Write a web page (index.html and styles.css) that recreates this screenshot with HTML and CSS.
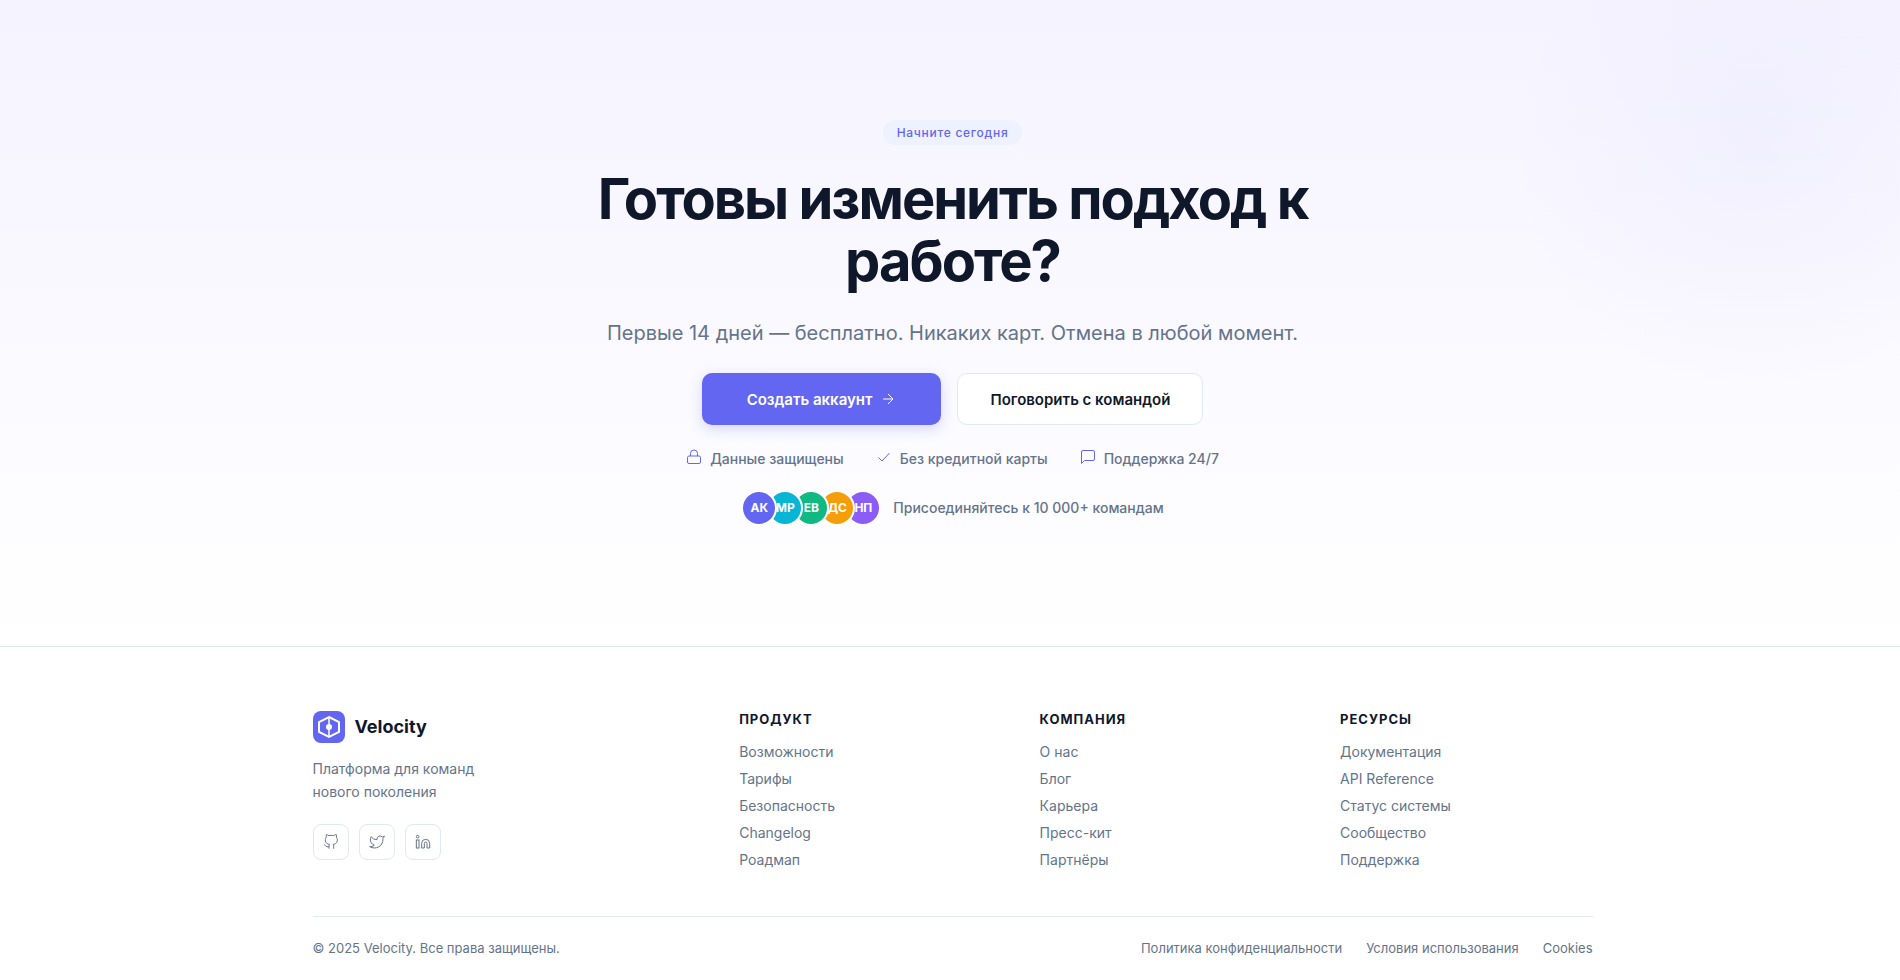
FILE: index.html
```html
<!DOCTYPE html>
<html lang="ru">
<head>
<meta charset="UTF-8">
<meta name="viewport" content="width=device-width, initial-scale=1">
<title>Velocity</title>
<link rel="stylesheet" href="styles.css">
</head>
<body>

<!-- CTA -->
<section class="cta">
  <div class="cta-glow"></div>
  <div class="cta-content">
    <span class="badge">Начните сегодня</span>
    <h2 class="cta-title">Готовы изменить подход к работе?</h2>
    <p class="cta-subtitle">Первые 14 дней — бесплатно. Никаких карт. Отмена в любой момент.</p>

    <div class="cta-actions">
      <button class="btn btn-primary" type="button">
        Создать аккаунт
        <svg width="16" height="16" viewBox="0 0 16 16"><path d="M3 8h10M8 3l5 5-5 5"/></svg>
      </button>
      <button class="btn btn-secondary" type="button">Поговорить с командой</button>
    </div>

    <div class="cta-trust">
      <div class="trust-item">
        <svg width="16" height="16" viewBox="0 0 16 16"><rect x="1.5" y="7" width="13" height="7.5" rx="1.5"/><path d="M4.5 7V4.5a3.5 3.5 0 0 1 7 0V7"/></svg>
        <span>Данные защищены</span>
      </div>
      <div class="trust-item">
        <svg width="16" height="16" viewBox="0 0 16 16"><path d="M13.5 4L6 12 2.5 8.5"/></svg>
        <span>Без кредитной карты</span>
      </div>
      <div class="trust-item">
        <svg width="16" height="16" viewBox="0 0 16 16"><path d="M14.5 10a1.5 1.5 0 0 1-1.5 1.5H4.5l-3 3V3A1.5 1.5 0 0 1 3 1.5h10A1.5 1.5 0 0 1 14.5 3z"/></svg>
        <span>Поддержка 24/7</span>
      </div>
    </div>

    <div class="cta-social">
      <div class="avatars">
        <span class="avatar indigo">АК</span>
        <span class="avatar cyan">МР</span>
        <span class="avatar green">ЕВ</span>
        <span class="avatar amber">ДС</span>
        <span class="avatar violet">НП</span>
      </div>
      <span>Присоединяйтесь к 10 000+ командам</span>
    </div>
  </div>
</section>

<!-- Footer -->
<footer class="footer">
  <div class="footer-container">
    <div class="footer-grid">
      <div class="footer-brand">
        <a href="#" class="logo">
          <svg width="32" height="32" viewBox="0 0 32 32">
            <rect width="32" height="32" rx="8" fill="#6366f1"/>
            <path d="M16 6l10 5v10l-10 5-10-5V11z" fill="none" stroke="#fff" stroke-width="2"/>
            <path d="M16 6v20" stroke="#fff" stroke-width="1.5"/>
            <circle cx="16" cy="16" r="3" fill="#fff"/>
          </svg>
          <span>Velocity</span>
        </a>
        <p class="tagline">Платформа для команд<br>нового поколения</p>
        <div class="socials">
          <a href="#" aria-label="GitHub">
            <svg width="16" height="16" viewBox="0 0 24 24"><path d="M9 19c-5 1.5-5-2.5-7-3m14 6v-3.87a3.37 3.37 0 0 0-.94-2.61c3.14-.35 6.44-1.54 6.44-7A5.44 5.44 0 0 0 20 4.77 5.07 5.07 0 0 0 19.91 1S18.73.65 16 2.48a13.38 13.38 0 0 0-7 0C6.27.65 5.09 1 5.09 1A5.07 5.07 0 0 0 5 4.77a5.44 5.44 0 0 0-1.5 3.78c0 5.42 3.3 6.61 6.44 7A3.37 3.37 0 0 0 9 18.13V22"/></svg>
          </a>
          <a href="#" aria-label="Twitter">
            <svg width="16" height="16" viewBox="0 0 24 24"><path d="M23 3a10.9 10.9 0 0 1-3.14 1.53 4.48 4.48 0 0 0-7.86 3v1A10.66 10.66 0 0 1 3 4s-4 9 5 13a11.64 11.64 0 0 1-7 2c9 5 20 0 20-11.5a4.5 4.5 0 0 0-.08-.83A7.72 7.72 0 0 0 23 3z"/></svg>
          </a>
          <a href="#" aria-label="LinkedIn">
            <svg width="16" height="16" viewBox="0 0 24 24"><path d="M16 8a6 6 0 0 1 6 6v7h-4v-7a2 2 0 0 0-4 0v7h-4v-7a6 6 0 0 1 6-6z"/><rect x="2" y="9" width="4" height="12"/><circle cx="4" cy="4" r="2"/></svg>
          </a>
        </div>
      </div>

      <div class="footer-col">
        <h4>Продукт</h4>
        <ul>
          <li><a href="#">Возможности</a></li>
          <li><a href="#">Тарифы</a></li>
          <li><a href="#">Безопасность</a></li>
          <li><a href="#">Changelog</a></li>
          <li><a href="#">Роадмап</a></li>
        </ul>
      </div>

      <div class="footer-col">
        <h4>Компания</h4>
        <ul>
          <li><a href="#">О нас</a></li>
          <li><a href="#">Блог</a></li>
          <li><a href="#">Карьера</a></li>
          <li><a href="#">Пресс-кит</a></li>
          <li><a href="#">Партнёры</a></li>
        </ul>
      </div>

      <div class="footer-col">
        <h4>Ресурсы</h4>
        <ul>
          <li><a href="#">Документация</a></li>
          <li><a href="#">API Reference</a></li>
          <li><a href="#">Статус системы</a></li>
          <li><a href="#">Сообщество</a></li>
          <li><a href="#">Поддержка</a></li>
        </ul>
      </div>
    </div>

    <div class="footer-bottom">
      <span>© 2025 Velocity. Все права защищены.</span>
      <nav class="legal">
        <a href="#">Политика конфиденциальности</a>
        <a href="#">Условия использования</a>
        <a href="#">Cookies</a>
      </nav>
    </div>
  </div>
</footer>

</body>
</html>
```
FILE: styles.css
```css
:root {
  --primary: #6366f1;
  --text: #0f172a;
  --muted: #64748b;
  --border: #e2e8f0;
}

* {
  margin: 0;
  padding: 0;
  box-sizing: border-box;
}

html {
  overflow-x: hidden;
  scrollbar-width: none;
}

body {
  width: calc(100% + 5px);
  font-family: Inter, "Liberation Sans", sans-serif;
  font-size: 14px;
  line-height: 22px;
  color: var(--text);
  background: #fff;
}

a {
  color: inherit;
  text-decoration: none;
}

svg {
  flex-shrink: 0;
}

/* CTA */
.cta {
  position: relative;
  overflow: hidden;
  padding: 120px 24px;
  background: linear-gradient(180deg, #f5f3ff 0%, #fff 100%);
}

.cta-glow {
  position: absolute;
  top: -100px;
  right: -100px;
  width: 500px;
  height: 500px;
  border-radius: 50%;
  background: radial-gradient(circle, rgba(99, 102, 241, 0.04) 0%, transparent 70%);
}

.cta-content {
  position: relative;
  max-width: 720px;
  margin: 0 auto;
  display: flex;
  flex-direction: column;
  align-items: center;
  text-align: center;
}

.badge {
  padding: 4px 14px;
  border-radius: 12px;
  background: #eef2ff;
  color: var(--primary);
  font-size: 12px;
  font-weight: 500;
  line-height: 17px;
  letter-spacing: 0.06em;
  margin-bottom: 23px;
}

.cta-title {
  font-size: 56px;
  font-weight: 700;
  line-height: 62px;
  letter-spacing: -2px;
  margin-bottom: 25px;
}

.cta-subtitle {
  font-size: 20px;
  line-height: 32px;
  color: var(--muted);
  margin-bottom: 24px;
}

.cta-actions {
  display: flex;
  gap: 16px;
  margin-bottom: 24px;
}

.btn {
  display: inline-flex;
  align-items: center;
  justify-content: center;
  gap: 8px;
  height: 52px;
  border: 1px solid transparent;
  border-radius: 10px;
  font-family: inherit;
  font-size: 15px;
  font-weight: 600;
  cursor: pointer;
}

.btn svg {
  fill: none;
  stroke: currentColor;
  stroke-width: 1;
}

.btn-primary {
  padding: 0 44px;
  background: var(--primary);
  color: #fff;
  box-shadow: 0 4px 14px rgba(99, 102, 241, 0.25);
}

.btn-secondary {
  padding: 0 32px;
  background: #fff;
  border-color: var(--border);
  color: var(--text);
}

.cta-trust {
  display: flex;
  gap: 32px;
  color: var(--muted);
  font-weight: 500;
  line-height: 20px;
  margin-bottom: 21px;
}

.trust-item {
  display: flex;
  gap: 8px;
}

.trust-item svg {
  fill: none;
  stroke: var(--primary);
  stroke-width: 1;
}

.cta-social {
  display: flex;
  align-items: center;
  gap: 12px;
  color: var(--muted);
  font-weight: 500;
}

.avatars {
  display: flex;
}

.avatar {
  position: relative;
  width: 36px;
  height: 36px;
  display: flex;
  align-items: center;
  justify-content: center;
  border: 2px solid #fff;
  border-radius: 50%;
  color: #fff;
  font-size: 12px;
  font-weight: 700;
}

.avatar + .avatar {
  margin-left: -10px;
}

/* the first avatars lie over the next ones */
.avatar.indigo { background: #6366f1; z-index: 5; }
.avatar.cyan   { background: #06b6d4; z-index: 4; }
.avatar.green  { background: #10b981; z-index: 3; }
.avatar.amber  { background: #f59e0b; z-index: 2; }
.avatar.violet { background: #8b5cf6; z-index: 1; }

/* Footer */
.footer {
  border-top: 1px solid var(--border);
  padding: 64px 24px 20px;
}

.footer-container {
  max-width: 1280px;
  margin: 0 auto;
}

.footer-grid {
  display: grid;
  grid-template-columns: 1.5fr 1fr 1fr 1fr;
  gap: 48px;
  margin-bottom: 45px;
}

.logo {
  display: inline-flex;
  align-items: center;
  gap: 10px;
  font-size: 18px;
  font-weight: 700;
  margin-bottom: 14px;
}

.tagline {
  color: var(--muted);
  line-height: 23px;
  margin-bottom: 21px;
}

.socials {
  display: flex;
  gap: 10px;
}

.socials a {
  width: 36px;
  height: 36px;
  display: flex;
  align-items: center;
  justify-content: center;
  border: 1px solid var(--border);
  border-radius: 8px;
  color: var(--muted);
}

.socials svg {
  fill: none;
  stroke: currentColor;
  stroke-width: 1.5;
}

.footer-col h4 {
  font-size: 13px;
  font-weight: 700;
  line-height: 16px;
  letter-spacing: 1px;
  text-transform: uppercase;
  margin-bottom: 14px;
}

.footer-col ul {
  list-style: none;
  display: grid;
  gap: 5px;
}

.footer-col a {
  color: var(--muted);
}

.footer-bottom {
  display: flex;
  justify-content: space-between;
  border-top: 1px solid var(--border);
  padding-top: 20px;
  font-size: 13px;
  color: var(--muted);
}

.legal {
  display: flex;
  gap: 24px;
}
```
